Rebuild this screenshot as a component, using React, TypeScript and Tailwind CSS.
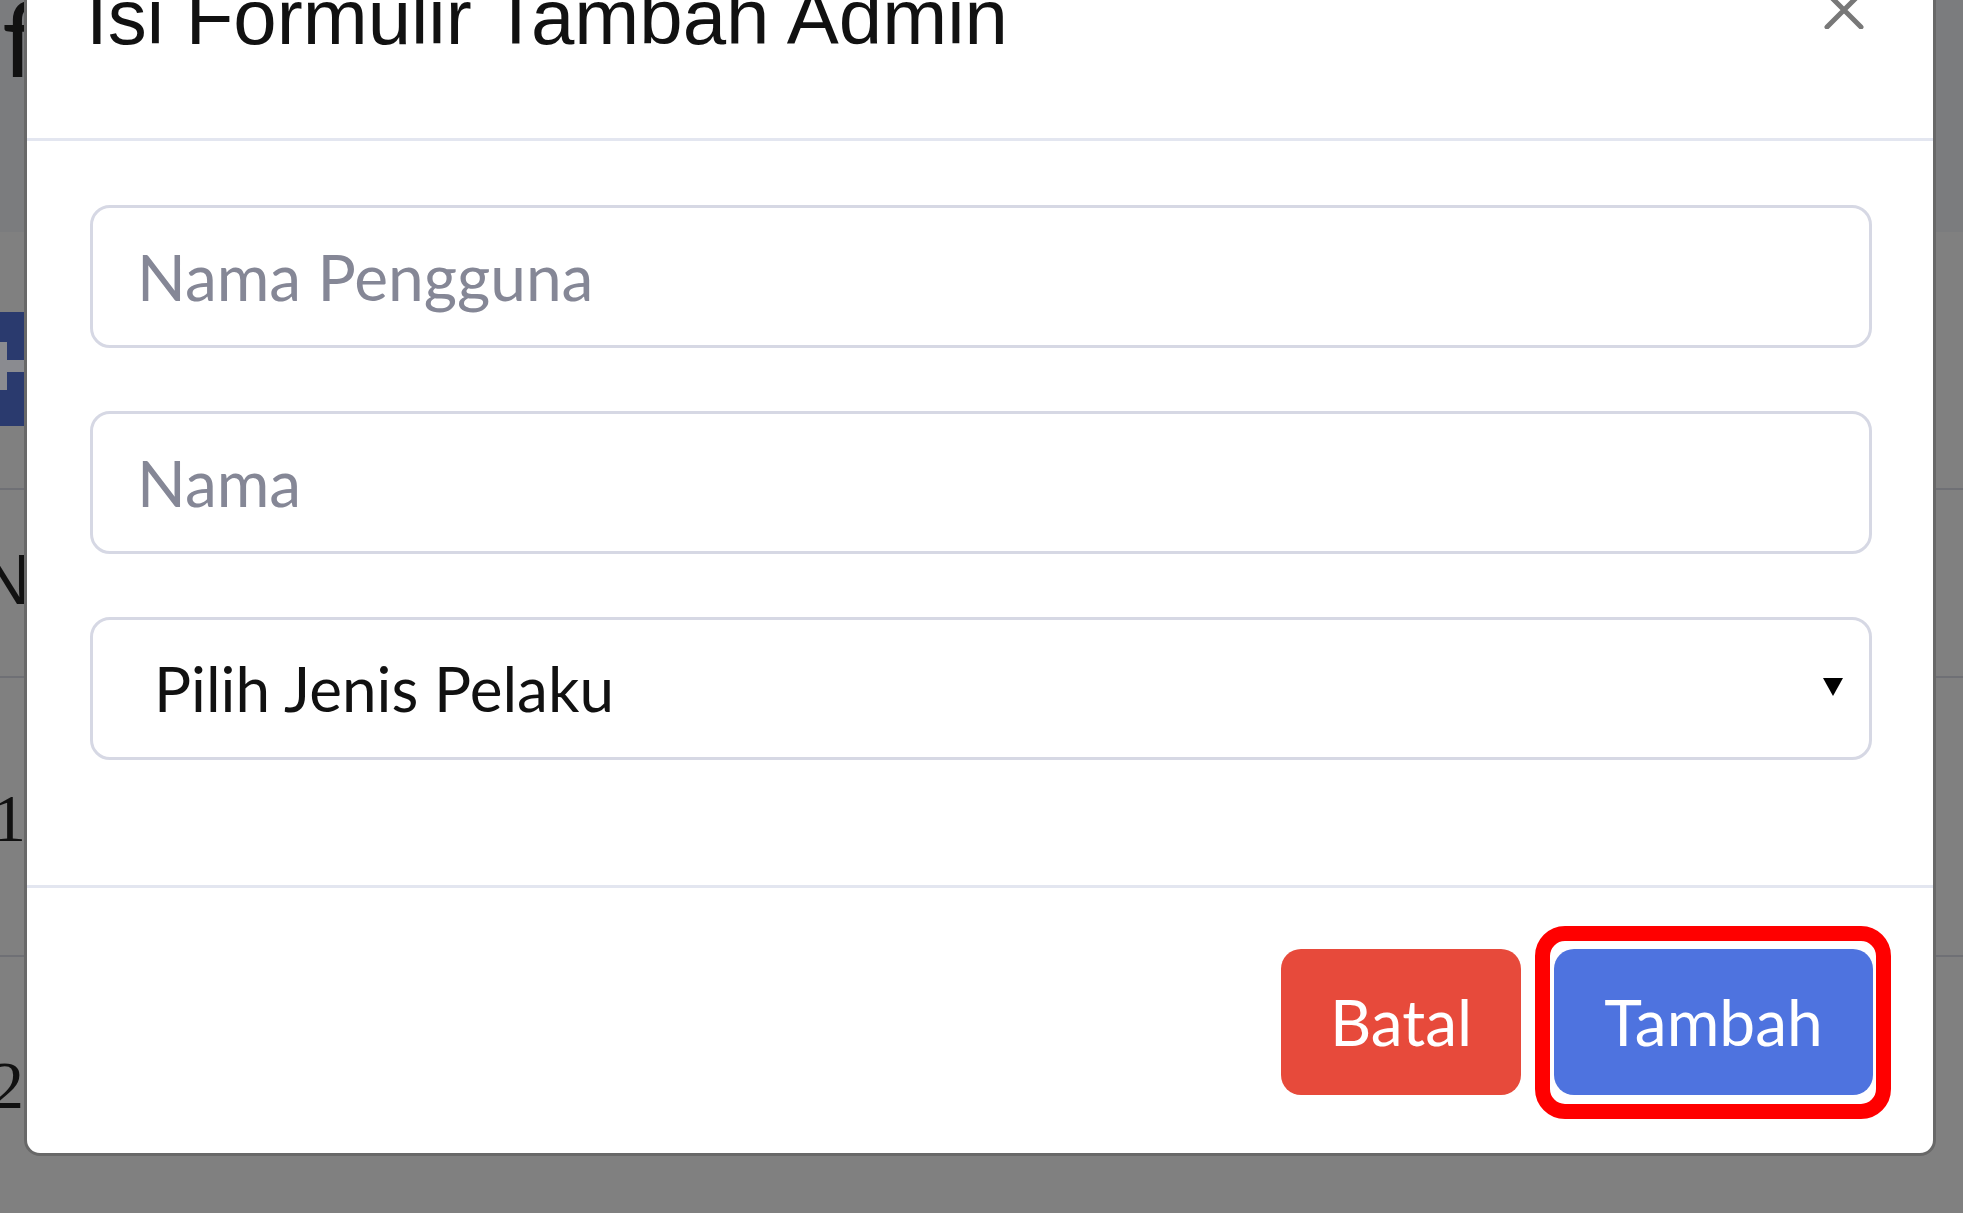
function PageBehind() {
  // darkened page that shows at the edges of the modal
  return (
    <div className="flex flex-col">
      <div className="h-[232px] overflow-hidden bg-[#7b7c7e]">
        <span className="-mt-[16px] block pl-[2px] font-['Lato',sans-serif] text-[105px] leading-none text-[#111]">
          f
        </span>
      </div>
      <div className="h-[258px] border-b-2 border-[#6f7075] pt-[80px]">
        <div className="h-[114px] w-[80px] bg-[#2a3a6e]">
          <svg width="80" height="114" viewBox="0 0 80 114">
            <rect x="0" y="30" width="7" height="48" fill="#8a8b90" />
            <rect x="0" y="48" width="60" height="12" fill="#8a8b90" />
          </svg>
        </div>
      </div>
      <div className="h-[188px] border-b-2 border-[#6f7075]">
        <span className="-ml-[20px] mt-[55px] block font-['Liberation_Sans',Arial,sans-serif] text-[70px] leading-none text-[#111]">
          N
        </span>
      </div>
      <div className="h-[279px] border-b-2 border-[#6f7075]">
        <span className="-ml-[8px] mt-[106px] block font-['Liberation_Serif',serif] text-[68px] leading-none text-[#111]">
          1
        </span>
      </div>
      <div className="flex-1">
        <span className="-ml-[10px] mt-[94px] block font-['Liberation_Serif',serif] text-[68px] leading-none text-[#111]">
          2
        </span>
      </div>
    </div>
  );
}

function CloseIcon() {
  return (
    <svg width="40" height="38" viewBox="0 0 40 38" className="mt-[48px] shrink-0">
      <path d="M3 2 L37 36 M37 2 L3 36" stroke="#787878" strokeWidth="5" strokeLinecap="round" />
    </svg>
  );
}

function Modal() {
  return (
    <div className="-mt-[60px] ml-[24px] mr-[27px] rounded-[16px] border-[3px] border-[#686868] bg-white">
      <div className="flex h-[198px] items-start justify-between border-b-[3px] border-[#e3e6f0] pl-[59px] pr-[69px]">
        <h5 className="mt-[35px] font-['Liberation_Sans',Arial,sans-serif] text-[78px] font-normal leading-none text-[#111]">
          Isi Formulir Tambah Admin
        </h5>
        <CloseIcon />
      </div>

      <div className="flex flex-col gap-[63px] pb-[125px] pl-[63px] pr-[61px] pt-[64px] font-['Lato',sans-serif]">
        <input
          placeholder="Nama Pengguna"
          className="h-[143px] w-full rounded-[20px] border-[3px] border-[#d6d8e4] bg-white pl-[44px] text-[64px] text-[#111] outline-none placeholder:text-[#858796]"
        />
        <input
          placeholder="Nama"
          className="h-[143px] w-full rounded-[20px] border-[3px] border-[#d6d8e4] bg-white pl-[44px] text-[64px] text-[#111] outline-none placeholder:text-[#858796]"
        />
        <div className="relative">
          <select className="h-[143px] w-full appearance-none rounded-[20px] border-[3px] border-[#d6d8e4] bg-white pl-[61px] text-[62px] text-[#111] outline-none">
            <option>Pilih Jenis Pelaku</option>
            <option>Admin</option>
          </select>
          <svg
            width="22"
            height="20"
            viewBox="0 0 22 20"
            className="pointer-events-none absolute right-[28px] top-[60px]"
          >
            <path d="M1 1 L21 1 L11 19 Z" fill="#000" />
          </svg>
        </div>
      </div>

      <div className="flex justify-end gap-[33px] border-t-[3px] border-[#e3e6f0] pb-[58px] pr-[60px] pt-[61px] font-['Lato',sans-serif]">
        <button className="h-[146px] w-[240px] rounded-[20px] bg-[#e74a3b] text-[64px] text-white">
          Batal
        </button>
        <div className="relative">
          <button className="h-[146px] w-[319px] rounded-[20px] bg-[#4e73df] text-[64px] text-white">
            Tambah
          </button>
          <div className="pointer-events-none absolute -bottom-[24px] -left-[19px] -right-[18px] -top-[23px] rounded-[30px] border-[15px] border-[#ff0000]" />
        </div>
      </div>
    </div>
  );
}

export default function App() {
  return (
    <div className="relative h-[1213px] w-[1963px] overflow-hidden bg-[#808080]">
      <PageBehind />
      <div className="absolute inset-0 flex flex-col">
        <Modal />
      </div>
    </div>
  );
}
